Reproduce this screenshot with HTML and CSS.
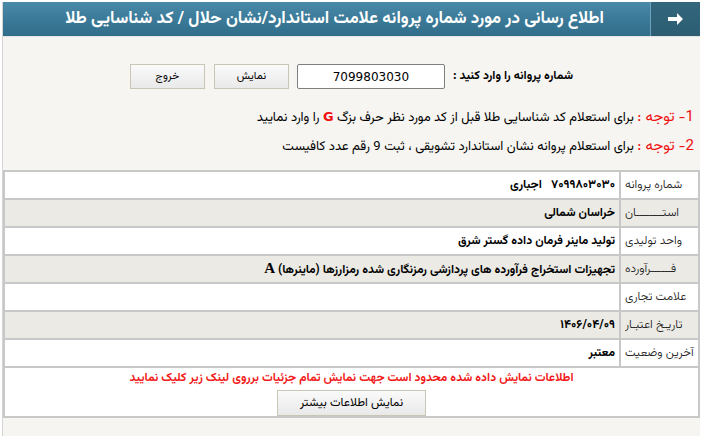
FILE: index.html
```html
<!DOCTYPE html>
<html lang="fa" dir="rtl">
<head>
<meta charset="utf-8">
<title>استعلام پروانه</title>
<link rel="stylesheet" href="styles.css">
</head>
<body>
<div class="panel">
  <div class="header">
    <div class="arrow">
      <svg width="17" height="14" viewBox="0 0 17 14"><path d="M1 5h9V1l6 6-6 6V9H1z" fill="#fff"/></svg>
    </div>
    <div class="title">اطلاع رسانی در مورد شماره پروانه علامت استاندارد/نشان حلال / کد شناسایی طلا</div>
  </div>
  <div class="form">
    <span class="form-label">شماره پروانه را وارد کنید :</span>
    <input class="input" type="text" value="7099803030" dir="ltr">
    <button class="btn">نمایش</button>
    <button class="btn">خروج</button>
  </div>
  <div class="note"><span class="note-head">1- توجه :</span> برای استعلام کد شناسایی طلا قبل از کد مورد نظر حرف بزگ <b class="red">G</b> را وارد نمایید</div>
  <div class="note"><span class="note-head">2- توجه :</span> برای استعلام پروانه نشان استاندارد تشویقی ، ثبت 9 رقم عدد کافیست</div>
  <table class="info">
    <tr class="w"><td class="lbl">شماره پروانه</td><td class="val">۷۰۹۹۸۰۳۰۳۰&nbsp;&nbsp; اجباری</td></tr>
    <tr class="g"><td class="lbl">استــــــــان</td><td class="val">خراسان شمالی</td></tr>
    <tr class="w"><td class="lbl">واحد تولیدی</td><td class="val">تولید ماینر فرمان داده گستر شرق</td></tr>
    <tr class="g"><td class="lbl">فــــــرآورده</td><td class="val">تجهیزات استخراج فرآورده های پردازشی رمزنگاری شده رمزارزها (ماینرها) <span class="latin">A</span></td></tr>
    <tr class="w"><td class="lbl">علامت تجاری</td><td class="val"></td></tr>
    <tr class="g"><td class="lbl">تاریـخ اعتبـار</td><td class="val">۱۴۰۶/۰۴/۰۹</td></tr>
    <tr class="w"><td class="lbl">آخرین وضعیت</td><td class="val">معتبر</td></tr>
    <tr class="w"><td class="more" colspan="2">
      <div class="more-text">اطلاعات نمایش داده شده محدود است جهت نمایش تمام جزئیات برروی لینک زیر کلیک نمایید</div>
      <button class="btn btn-more">نمایش اطلاعات بیشتر</button>
    </td></tr>
  </table>
</div>
</body>
</html>
```

FILE: styles.css
```css
html, body {
  margin: 0;
  padding: 0;
  background: #ffffff;
}
body {
  font-family: Vazirmatn, Tahoma, "DejaVu Sans", sans-serif;
  font-size: 12px;
  color: #000;
}
.panel {
  margin: 2px 1px 0 2px;
  background: #f6f5f1;
  border-left: 1px solid #d4d4d4;
  height: 434px;
  box-sizing: border-box;
}
.header {
  display: flex;
  flex-direction: row;
  height: 34px;
  background: linear-gradient(#4a8aa9, #3b7a98 50%, #306e8b);
  border-bottom: 1px solid #e4e4e4;
}
.arrow {
  width: 49px;
  flex: none;
  display: flex;
  align-items: center;
  justify-content: center;
  background: linear-gradient(#33677d, #2c5d72);
  border-left: 1px solid #6da1bb;
}
.title {
  color: #fff;
  font-weight: bold;
  font-size: 17px;
  line-height: 34px;
  padding-right: 46px;
  white-space: nowrap;
}
.form {
  display: flex;
  justify-content: center;
  align-items: center;
  padding-top: 27px;
  gap: 8px;
}
.form-label {
  font-weight: bold;
  font-size: 12px;
  line-height: 25px;
}
.input {
  width: 148px;
  height: 25px;
  box-sizing: border-box;
  border: 1px solid #7f7f7f;
  border-radius: 2px;
  text-align: center;
  font-family: "DejaVu Sans", sans-serif;
  font-size: 12px;
  padding: 0;
  background: #fff;
}
.btn {
  width: 75px;
  height: 25px;
  box-sizing: border-box;
  border: 1px solid #c9c6b6;
  background: linear-gradient(#fafafa, #e9e9e9);
  font-family: Vazirmatn, Tahoma, "DejaVu Sans", sans-serif;
  font-size: 11px;
  color: #000;
  padding: 0;
}
.form .btn + .btn {
  margin-right: 1px;
}
.note {
  height: 30px;
  line-height: 30px;
  padding-right: 6px;
  font-size: 13px;
  white-space: nowrap;
}
.form + .note {
  margin-top: 13px;
}
.note-head {
  color: #f01010;
  font-size: 15px;
}
.red {
  color: #f01010;
  font-family: "DejaVu Sans", sans-serif;
  font-size: 13px;
}
.info {
  margin-top: 8px;
  width: 697px;
  border-collapse: collapse;
  border: 2px solid #c8c8c8;
}
.info td {
  border: 2px solid #c8c8c8;
  height: 28px;
  padding: 0 4px;
  box-sizing: border-box;
  line-height: 18px;
}
.w td { background: #fff; }
.g td { background: #ebeae4; }
.lbl {
  width: 79px;
  color: #222;
  font-size: 12px;
  white-space: nowrap;
  text-align: left;
  font-weight: 300;
}
.val {
  font-weight: bold;
  font-size: 12px;
}
.latin {
  font-family: "Liberation Serif", serif;
  font-size: 15px;
}
.more {
  text-align: center;
  height: 53px;
  vertical-align: top;
  padding-top: 4px;
}
.more-text {
  color: #f21a1a;
  font-weight: bold;
  font-size: 12px;
  line-height: 20px;
}
.btn-more {
  width: 149px;
  height: 26px;
  margin-top: 2px;
  font-size: 12px;
}
```
